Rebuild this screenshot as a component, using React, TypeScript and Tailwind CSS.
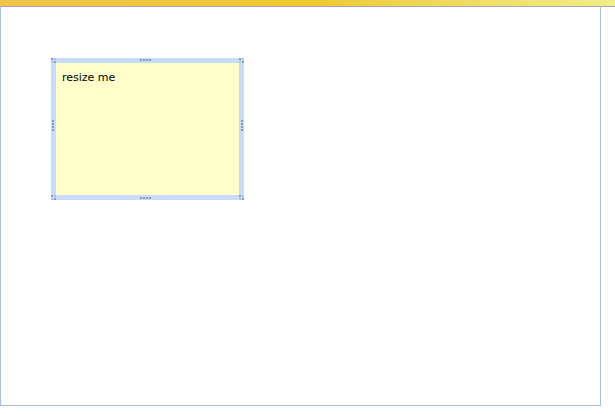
const Dots = ({ dir }: { dir: 'h' | 'v' }) => (
  <div className={dir === 'h' ? 'flex gap-[1px]' : 'flex flex-col gap-[1px]'}>
    {[0, 1, 2, 3].map((i) => (
      <span key={i} className="block w-[2px] h-[2px] bg-[#7f9bc6]" />
    ))}
  </div>
)

const Corner = () => (
  <div className="grid grid-cols-2 gap-[1px] w-[5px]">
    <span className="block w-[2px] h-[2px] bg-[#7f9bc6]" />
    <span className="block w-[2px] h-[2px] bg-[#aec2de]" />
    <span className="block w-[2px] h-[2px] bg-[#aec2de]" />
    <span className="block w-[2px] h-[2px] bg-[#7f9bc6]" />
  </div>
)

export default function App() {
  return (
    <div className="w-[615px] h-[414px] bg-white overflow-hidden" style={{ fontFamily: '"DejaVu Sans", sans-serif' }}>
      <div className="h-[6px] bg-gradient-to-r from-[#f3c34c] via-[#efc82c] to-[#f0ee88]" />
      <div className="h-[1px] bg-[#a3aab3]" />
      <div className="w-[601px] h-[399px] border-x border-b border-[#a9bedb] pl-[50px] pt-[51px]">
        <div className="relative w-[193px] h-[142px] bg-[#c8dbf8] p-[5px]">
          <div className="w-full h-full bg-[#ffffcc] px-[6px] pt-[9px] text-[11px] text-black leading-none">
            resize me
          </div>
          <div className="absolute left-0 top-0"><Corner /></div>
          <div className="absolute right-0 top-0"><Corner /></div>
          <div className="absolute left-0 bottom-0"><Corner /></div>
          <div className="absolute right-0 bottom-0"><Corner /></div>
          <div className="absolute left-[89px] top-[1px]"><Dots dir="h" /></div>
          <div className="absolute left-[89px] bottom-[1px]"><Dots dir="h" /></div>
          <div className="absolute left-[1px] top-[62px]"><Dots dir="v" /></div>
          <div className="absolute right-[1px] top-[62px]"><Dots dir="v" /></div>
        </div>
      </div>
    </div>
  )
}
